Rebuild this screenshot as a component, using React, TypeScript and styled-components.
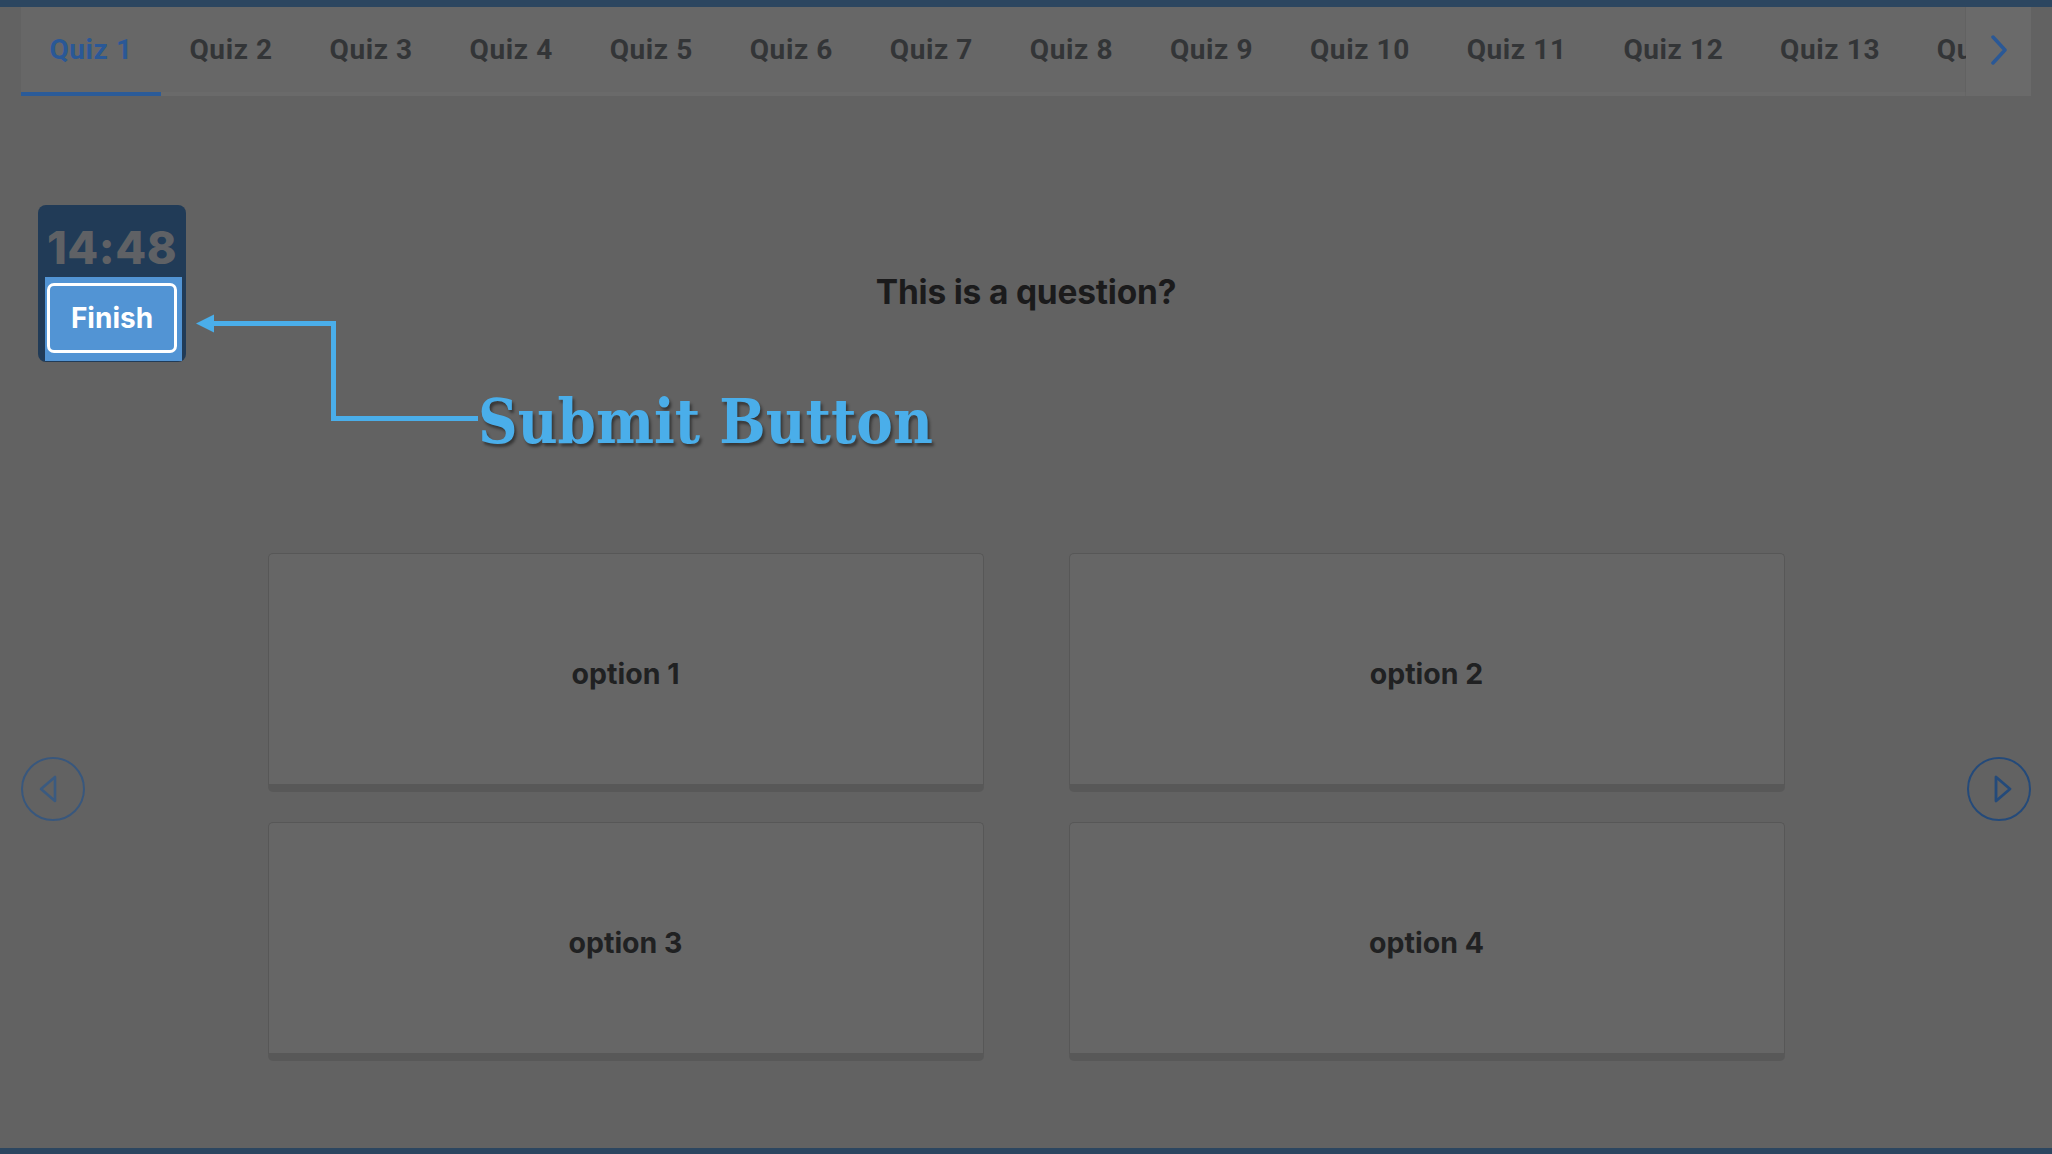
import React from "react";
import styled, { createGlobalStyle } from "styled-components";

const GlobalStyle = createGlobalStyle`
  html, body {
    margin: 0;
    padding: 0;
    background: #626262;
  }
  * { box-sizing: border-box; }
`;

const Page = styled.div`
  position: relative;
  height: 1154px;
  display: flex;
  flex-direction: column;
  background: #626262;
  overflow: hidden;
`;

const TopBar = styled.div`
  height: 7px;
  background: #2c4660;
  flex: none;
`;

const BottomBar = styled.div`
  height: 6px;
  background: #2c4660;
  flex: none;
`;

const TabsRow = styled.div`
  display: flex;
  margin: 0 21px;
  height: 89px;
  flex: none;
`;

const TabList = styled.div`
  flex: 1;
  display: flex;
  overflow: hidden;
  background: #676767;
  box-shadow: inset 0 -4px 0 #6a6a6a;
`;

const Tab = styled.div<{ $active?: boolean }>`
  flex: none;
  display: flex;
  align-items: center;
  justify-content: center;
  padding: 0 28.4px 4px;
  height: 89px;
  font-family: Roboto, "Liberation Sans", sans-serif;
  font-weight: 700;
  font-size: 28px;
  letter-spacing: 0.6px;
  white-space: nowrap;
  color: ${(p) => (p.$active ? "#2a5896" : "#333537")};
  box-shadow: ${(p) => (p.$active ? "inset 0 -4px 0 #2b5b98" : "none")};
`;

const ScrollButton = styled.div`
  flex: none;
  width: 65px;
  height: 89px;
  display: flex;
  align-items: center;
  justify-content: center;
  padding-bottom: 4px;
  background: #6a6a6a;
  box-shadow: -1px 0 0 rgba(0, 0, 0, 0.04);
`;

const Content = styled.div`
  flex: 1;
  display: grid;
  grid-template-columns: 246px 1518px 246px;
  padding: 0 21px;
`;

const SideColumn = styled.div<{ $right?: boolean }>`
  display: flex;
  flex-direction: column;
  align-items: ${(p) => (p.$right ? "flex-end" : "flex-start")};
`;

const TimerBox = styled.div`
  margin: 109px 0 0 17px;
  width: 148px;
  height: 157px;
  border-radius: 8px;
  background: #213b57;
  display: flex;
  flex-direction: column;
  overflow: hidden;
`;

const TimeText = styled.div`
  height: 72px;
  display: flex;
  align-items: center;
  justify-content: center;
  padding-top: 12px;
  font-family: Inter, "Liberation Sans", sans-serif;
  font-weight: 800;
  font-size: 45px;
  letter-spacing: 0.5px;
  color: #5f6165;
`;

const FinishPanel = styled.div`
  flex: 1;
  margin: 0 4px 1px 7px;
  background: #5294d4;
  display: flex;
  align-items: flex-start;
  justify-content: center;
  padding: 6px 3px 0 0;
`;

const FinishButton = styled.button`
  width: 130px;
  height: 70px;
  border: 3px solid #ffffff;
  border-radius: 7px;
  background: transparent;
  color: #ffffff;
  font-family: Inter, "Liberation Sans", sans-serif;
  font-weight: 700;
  font-size: 28px;
  padding: 0;
  cursor: pointer;
`;

const NavButton = styled.button<{ $top: number; $faded?: boolean }>`
  margin-top: ${(p) => p.$top}px;
  width: 64px;
  height: 64px;
  border-radius: 50%;
  border: 2px solid ${(p) => (p.$faded ? "#38577d" : "#244a7a")};
  background: transparent;
  display: flex;
  align-items: center;
  justify-content: center;
  padding: 0;
  cursor: pointer;
`;

const Center = styled.div`
  display: flex;
  flex-direction: column;
  align-items: center;
`;

const Question = styled.h2`
  margin: 176px 0 0;
  height: 40px;
  line-height: 40px;
  font-family: Inter, "Liberation Sans", sans-serif;
  font-weight: 700;
  font-size: 33.5px;
  letter-spacing: -0.2px;
  color: #1b1b1c;
`;

const OptionsGrid = styled.div`
  margin-top: 241px;
  display: grid;
  grid-template-columns: 716px 716px;
  column-gap: 85px;
  row-gap: 30px;
`;

const OptionCard = styled.div`
  height: 239px;
  background: #666666;
  border: 1px solid #575757;
  border-bottom: 8px solid #585858;
  border-radius: 5px;
  display: flex;
  align-items: center;
  justify-content: center;
  padding-top: 8px;
  font-family: Inter, "Liberation Sans", sans-serif;
  font-weight: 700;
  font-size: 28.5px;
  color: #202122;
  cursor: pointer;
`;

const AnnotationLines = styled.svg`
  position: absolute;
  left: 0;
  top: 0;
  pointer-events: none;
`;

const AnnotationLabel = styled.div`
  position: absolute;
  left: 478px;
  top: 391px;
  font-family: "DejaVu Serif Condensed", "DejaVu Serif", serif;
  font-stretch: condensed;
  font-weight: 700;
  font-size: 61px;
  line-height: 1;
  white-space: nowrap;
  color: #4aaeea;
  text-shadow: 2px 3px 3px rgba(0, 0, 0, 0.45);
`;

const quizzes = Array.from({ length: 14 }, (_, i) => `Quiz ${i + 1}`);
const options = ["option 1", "option 2", "option 3", "option 4"];

export default function App() {
  return (
    <>
      <GlobalStyle />
      <Page>
        <TopBar />
        <TabsRow>
          <TabList>
            {quizzes.map((q, i) => (
              <Tab key={q} $active={i === 0}>
                {q}
              </Tab>
            ))}
          </TabList>
          <ScrollButton>
            <svg width="18" height="30" viewBox="0 0 18 30">
              <polyline
                points="3,2 15,15 3,28"
                fill="none"
                stroke="#2a5896"
                strokeWidth="3.5"
                strokeLinecap="round"
                strokeLinejoin="round"
              />
            </svg>
          </ScrollButton>
        </TabsRow>
        <Content>
          <SideColumn>
            <TimerBox>
              <TimeText>14:48</TimeText>
              <FinishPanel>
                <FinishButton>Finish</FinishButton>
              </FinishPanel>
            </TimerBox>
            <NavButton $top={395} $faded>
              <svg width="30" height="30" viewBox="0 0 30 30">
                <polygon
                  points="19,3 19,27 5,15"
                  fill="none"
                  stroke="#3a5a80"
                  strokeWidth="2.6"
                  strokeLinejoin="round"
                  transform="translate(-2 0)"
                />
              </svg>
            </NavButton>
          </SideColumn>
          <Center>
            <Question>This is a question?</Question>
            <OptionsGrid>
              {options.map((o) => (
                <OptionCard key={o}>{o}</OptionCard>
              ))}
            </OptionsGrid>
          </Center>
          <SideColumn $right>
            <NavButton $top={661}>
              <svg width="30" height="30" viewBox="0 0 30 30">
                <polygon
                  points="11,3 11,27 25,15"
                  fill="none"
                  stroke="#244a7a"
                  strokeWidth="2.8"
                  strokeLinejoin="round"
                  transform="translate(1 0)"
                />
              </svg>
            </NavButton>
          </SideColumn>
        </Content>
        <BottomBar />
        <AnnotationLines width="520" height="460" viewBox="0 0 520 460">
          <path
            d="M 210 323.5 H 333.5 V 418.5 H 478"
            fill="none"
            stroke="#4aaeea"
            strokeWidth="5"
          />
          <polygon points="196,323.5 214,314.5 214,332.5" fill="#4aaeea" />
        </AnnotationLines>
        <AnnotationLabel>Submit Button</AnnotationLabel>
      </Page>
    </>
  );
}
